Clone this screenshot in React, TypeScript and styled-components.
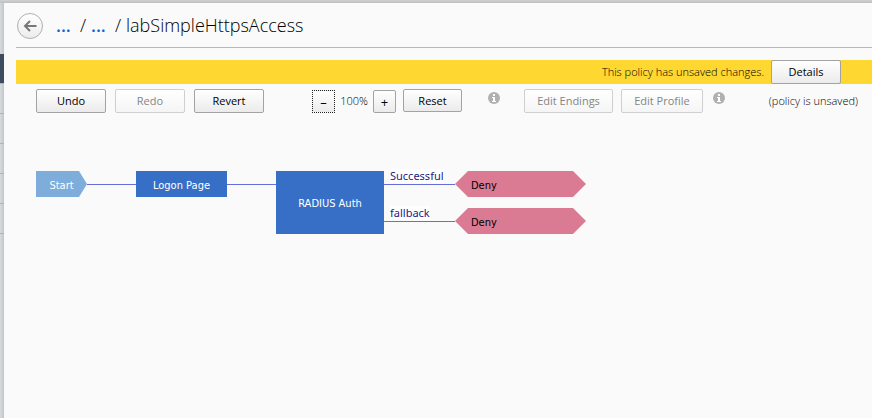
import React from 'react';
import styled, { createGlobalStyle } from 'styled-components';

const GlobalStyle = createGlobalStyle`
  *, *::before, *::after { box-sizing: border-box; }
  body {
    margin: 0;
    background: #d3d6d9;
    color: #000;
    font: 300 11px/16px 'Open Sans', 'Noto Sans', sans-serif;
  }
`;

const Shell = styled.div`
  display: grid;
  grid-template-columns: 4px minmax(0, 1fr);
  min-height: 100vh;
  padding-top: 3px;
  background: linear-gradient(#d0d2d4, #bcbec0) top / 100% 3px no-repeat, #d3d6d9;
`;

const SideRail = styled.ul`
  margin: 0;
  padding: 51px 0 0;
  list-style: none;
  background: linear-gradient(to right, #d8dbde, #c3c6c9);
`;

const RailItem = styled.li<{ $active?: boolean }>`
  height: 30px;
  border-bottom: 1px solid #b0b3b6;
  background: ${(p) => (p.$active ? '#3e4c60' : 'transparent')};
`;

const Panel = styled.main`
  min-width: 0;
  padding-left: 12px;
  background: #fafafa;
`;

const Header = styled.header`
  display: flex;
  align-items: center;
  height: 45px;
  padding-left: 1px;
  border-bottom: 1px solid #b8b8b8;
`;

const BackButton = styled.button`
  display: flex;
  align-items: center;
  justify-content: center;
  width: 26px;
  height: 26px;
  margin-top: 1px;
  padding: 0;
  border: 1px solid #b0b0b0;
  border-radius: 50%;
  background: linear-gradient(#fff, #ececec);
`;

const Breadcrumb = styled.nav`
  display: flex;
  margin-left: 13px;
  font-size: 18px;
  line-height: 26px;
`;

const Crumb = styled.a`
  width: 24px;
  color: #0a68d0;
  font-weight: 600;
  text-decoration: none;
`;

const Slash = styled.span`
  width: 11px;
`;

const Banner = styled.div`
  display: flex;
  align-items: center;
  justify-content: flex-end;
  gap: 7px;
  height: 24px;
  margin-top: 12px;
  padding-right: 31px;
  background: #fed731;
`;

const Button = styled.button<{ $width: number; $height?: number }>`
  flex: none;
  width: ${(p) => p.$width}px;
  height: ${(p) => p.$height ?? 24}px;
  padding: 0;
  border: 1px solid #a3a3a3;
  border-radius: 2px;
  background: linear-gradient(#fff, #ebebeb);
  color: #000;
  font: 400 11px/16px 'Open Sans', 'Noto Sans', sans-serif;
  white-space: nowrap;

  &:disabled {
    border-color: #cfcfcf;
    background: linear-gradient(#fff, #f5f5f5);
    color: #858585;
  }
`;

const ZoomButton = styled(Button)<{ $focused?: boolean }>`
  border-color: ${(p) => (p.$focused ? '#222' : '#a3a3a3')};
  border-style: ${(p) => (p.$focused ? 'dotted' : 'solid')};
  border-radius: ${(p) => (p.$focused ? 0 : 2)}px;
  font-size: 13px;
`;

const Toolbar = styled.div`
  display: flex;
  align-items: flex-start;
  margin-top: 5px;
  padding: 0 14px 0 20px;
`;

const HistoryGroup = styled.div`
  display: flex;
  gap: 9px;
  margin-right: 48px;
`;

const ZoomGroup = styled.div`
  display: flex;
  align-items: center;
  margin: 1px 7px 0 0;
`;

const ZoomLevel = styled.output`
  align-self: flex-start;
  width: 38px;
  line-height: 22px;
  text-align: center;
`;

const EditGroup = styled.div`
  display: flex;
  gap: 8px;
`;

const InfoIcon = styled.svg<{ $before: number; $after?: number }>`
  flex: none;
  width: 12px;
  height: 12px;
  margin: 3px ${(p) => p.$after ?? 0}px 0 ${(p) => p.$before}px;
`;

const PolicyState = styled.span`
  margin-left: auto;
  line-height: 24px;
  white-space: nowrap;
`;

const Flow = styled.section`
  display: flex;
  align-items: flex-start;
  margin-top: 58px;
  padding-left: 20px;
  font-family: 'Noto Sans', 'Open Sans', sans-serif;
  font-weight: 400;
`;

const Node = styled.div<{ $width: number; $height?: number }>`
  display: flex;
  align-items: center;
  justify-content: center;
  flex: none;
  width: ${(p) => p.$width}px;
  height: ${(p) => p.$height ?? 26}px;
  padding-top: ${(p) => (p.$height ? 2 : 4)}px;
  background: #376fc6;
  color: #fff;
  font-family: Tahoma, 'DejaVu Sans Condensed', 'Noto Sans', sans-serif;
`;

const StartNode = styled(Node)`
  background: #7eaddb;
  clip-path: polygon(0 0, 43px 0, 100% 50%, 43px 100%, 0 100%);
`;

const EndNode = styled(Node)`
  justify-content: flex-start;
  padding-left: 16px;
  background: #db7b93;
  color: #000;
  clip-path: polygon(13px 0, 118px 0, 100% 50%, 118px 100%, 13px 100%, 0 50%);
`;

const Link = styled.div<{ $width: number }>`
  flex: none;
  width: ${(p) => p.$width}px;
  height: 14px;
  border-bottom: 1px solid #6670dc;
  color: #1b1b85;
`;

const LinkLabel = styled.span`
  display: block;
  width: max-content;
  margin: -2px 0 0 6px;
  line-height: 14px;
  background: #fff;
`;

const Branches = styled.div`
  display: grid;
  gap: 11px;
`;

const Branch = styled.div`
  display: flex;
`;

const Info = ({ before, after }: { before: number; after?: number }) => (
  <InfoIcon $before={before} $after={after} viewBox="0 0 12 12" role="img" aria-label="Information">
    <circle cx="6" cy="6" r="6" fill="#b0b0b0" />
    <path d="M5 2h2v2H5zM4 5h3v4h1v1H4V9h1V6H4z" fill="#fff" />
  </InfoIcon>
);

const outcomes = [
  { label: 'Successful', ending: 'Deny' },
  { label: 'fallback', ending: 'Deny' },
];

export default function App() {
  return (
    <>
      <GlobalStyle />
      <Shell>
        <SideRail>
          <RailItem $active />
          <RailItem />
          <RailItem />
          <RailItem />
          <RailItem />
          <RailItem />
        </SideRail>
        <Panel>
          <Header>
            <BackButton aria-label="Back">
              <svg width="14" height="12" viewBox="0 0 14 12" fill="none" stroke="#777" strokeWidth="2">
                <path d="M13.5 6H2M7 1L2 6l5 5" />
              </svg>
            </BackButton>
            <Breadcrumb aria-label="Breadcrumb">
              <Crumb href="#policies">...</Crumb>
              <Slash>/</Slash>
              <Crumb href="#profile">...</Crumb>
              <Slash>/</Slash>
              <span>labSimpleHttpsAccess</span>
            </Breadcrumb>
          </Header>
          <Banner role="status">
            <span>This policy has unsaved changes.</span>
            <Button $width={70}>Details</Button>
          </Banner>
          <Toolbar>
            <HistoryGroup>
              <Button $width={70}>Undo</Button>
              <Button $width={70} disabled>Redo</Button>
              <Button $width={70}>Revert</Button>
            </HistoryGroup>
            <ZoomGroup>
              <ZoomButton $width={23} $height={23} $focused aria-label="Zoom out">–</ZoomButton>
              <ZoomLevel>100%</ZoomLevel>
              <ZoomButton $width={23} $height={23} aria-label="Zoom in">+</ZoomButton>
            </ZoomGroup>
            <Button $width={59} $height={23}>Reset</Button>
            <Info before={26} after={24} />
            <EditGroup>
              <Button $width={89} disabled>Edit Endings</Button>
              <Button $width={82} disabled>Edit Profile</Button>
            </EditGroup>
            <Info before={10} />
            <PolicyState>(policy is unsaved)</PolicyState>
          </Toolbar>
          <Flow aria-label="Policy flow">
            <StartNode $width={51}>Start</StartNode>
            <Link $width={49} />
            <Node $width={91}>Logon Page</Node>
            <Link $width={49} />
            <Node $width={108} $height={63}>RADIUS Auth</Node>
            <Branches>
              {outcomes.map((o) => (
                <Branch key={o.label}>
                  <Link $width={71}>
                    <LinkLabel>{o.label}</LinkLabel>
                  </Link>
                  <EndNode $width={131}>{o.ending}</EndNode>
                </Branch>
              ))}
            </Branches>
          </Flow>
        </Panel>
      </Shell>
    </>
  );
}
